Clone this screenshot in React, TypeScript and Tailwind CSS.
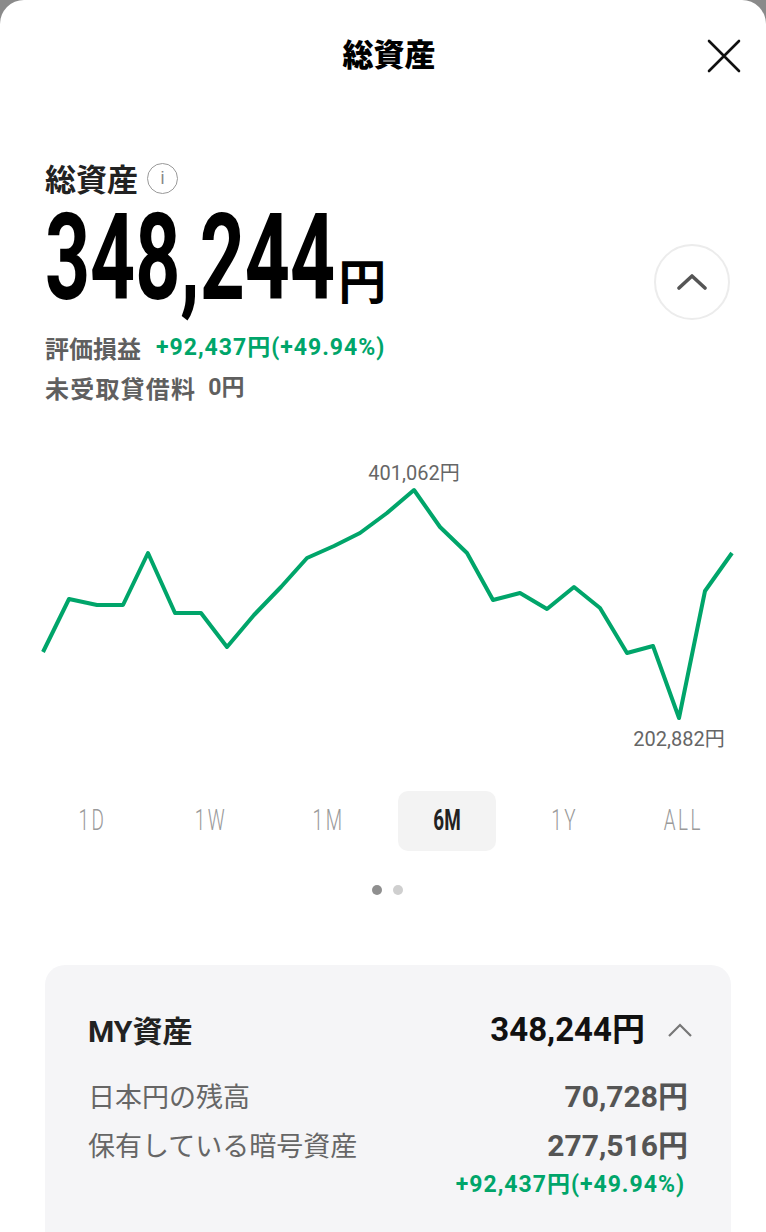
import React from "react";

const jp = "font-['Noto_Sans_CJK_JP','Noto_Sans',sans-serif]";
const num = "font-['Roboto','Noto_Sans_CJK_JP',sans-serif]";

const points: [number, number][] = [
  [43, 652], [69, 599], [97, 605], [123, 605], [148, 553], [175, 613], [201, 613],
  [227, 647], [254, 615], [281, 587], [307, 558], [334, 546], [360, 533], [387, 513],
  [414, 490], [440, 527], [467, 553], [493, 600], [520, 593], [547, 609], [574, 587],
  [600, 608], [627, 653], [653, 646], [679, 718], [705, 591], [732, 553],
];

const ranges = ["1D", "1W", "1M", "6M", "1Y", "ALL"];

const Chart = () => {
  const top = 440;
  const d = points.map(([x, y], i) => `${i ? "L" : "M"}${x} ${y - top}`).join(" ");
  return (
    <svg width="766" height="320" viewBox="0 0 766 320" className="block">
      <path d={d} fill="none" stroke="#00a56a" strokeWidth="4" strokeLinejoin="round" />
      <text x="414" y="40" textAnchor="middle" fontSize="20" fill="#666"
        fontFamily="Roboto,'Noto Sans CJK JP',sans-serif">401,062円</text>
      <text x="679" y="306" textAnchor="middle" fontSize="20" fill="#666"
        fontFamily="Roboto,'Noto Sans CJK JP',sans-serif">202,882円</text>
    </svg>
  );
};

export default function App() {
  return (
    <div className="h-[1232px] w-[766px] overflow-hidden bg-[#8a8a8a]">
      <div className={`relative h-full rounded-t-[24px] bg-white ${jp}`}>
        {/* header */}
        <div className="relative flex h-[110px] items-center justify-center pb-[6px] pl-[12px]">
          <h1 className="text-[31px] font-black leading-none text-black">総資産</h1>
          <button className="absolute right-[24px] top-[38px] h-[36px] w-[36px]">
            <svg viewBox="0 0 36 36" width="36" height="36">
              <path d="M3 3 L33 33 M33 3 L3 33" stroke="#111" strokeWidth="2.6" strokeLinecap="round" />
            </svg>
          </button>
        </div>

        {/* total */}
        <div className="relative px-[45px] pt-[50px]">
          <div className="flex h-[36px] items-center gap-[9px]">
            <span className="text-[31px] font-bold leading-[36px] text-[#222]">総資産</span>
            <span className="flex h-[31px] w-[31px] items-center justify-center rounded-full border-[1.5px] border-[#999] font-['Liberation_Sans',sans-serif] text-[18px] leading-none text-[#888]">
              i
            </span>
          </div>
          <div className="mt-[17px] flex h-[90px] items-baseline">
            <span className={`${num} mr-[-159px] inline-block origin-left scale-x-[0.65] text-[121px] font-bold leading-[90px] text-black`}>
              348,244
            </span>
            <span className="ml-[6px] text-[48px] font-semibold leading-[40px] text-black">円</span>
          </div>
          <button className="absolute right-[36px] top-[134px] flex h-[76px] w-[76px] items-center justify-center rounded-full border-2 border-[#ececec]">
            <svg viewBox="0 0 30 20" width="30" height="20">
              <path d="M2 16 L15 4 L28 16" fill="none" stroke="#555" strokeWidth="3.6" strokeLinecap="round" strokeLinejoin="round" />
            </svg>
          </button>
          <div className="mt-[25px] flex h-[40px] items-center gap-[15px] text-[24px] font-bold text-[#5f5f5f]">
            <span>評価損益</span>
            <span className={`${num} text-[23px] tracking-[1px] text-[#00a56a]`}>+92,437円(+49.94%)</span>
          </div>
          <div className="flex h-[40px] items-center gap-[12px] text-[24px] font-bold text-[#5f5f5f]">
            <span className="tracking-[1.2px]">未受取貸借料</span>
            <span className={`${num} text-[23px]`}>0円</span>
          </div>
        </div>

        {/* chart */}
        <div className="mt-[32px]">
          <Chart />
        </div>

        {/* range tabs */}
        <div className="ml-[34px] mt-[31px] grid w-[708px] grid-cols-6">
          {ranges.map((r) => (
            <div key={r} className="flex h-[60px] items-center justify-center">
              {r === "6M" ? (
                <span className="mx-[10px] flex h-[60px] w-full items-center justify-center rounded-[10px] bg-[#f3f3f3]">
                  <span className={`${num} inline-block scale-x-[0.65] text-[29px] font-bold text-[#222]`}>{r}</span>
                </span>
              ) : (
                <span className={`${num} inline-block scale-x-[0.65] text-[29px] font-light tracking-[4px] text-[#9a9a9a]`}>{r}</span>
              )}
            </div>
          ))}
        </div>

        {/* pager */}
        <div className="mt-[34px] flex justify-center gap-[11px] pl-[8px]">
          <span className="h-[10px] w-[10px] rounded-full bg-[#8f8f8f]" />
          <span className="h-[10px] w-[10px] rounded-full bg-[#cfcfcf]" />
        </div>

        {/* my assets card */}
        <div className="ml-[45px] mr-[35px] mt-[70px] h-[300px] rounded-[20px] bg-[#f5f5f7] px-[43px] pt-[45px]">
          <div className="flex h-[40px] items-center">
            <span className="text-[30px] font-bold text-[#222]">
              <span className={`${num} inline-block`}>MY</span>資産
            </span>
            <span className={`${num} ml-auto text-[33px] font-bold text-[#111]`}>348,244円</span>
            <svg viewBox="0 0 26 16" width="26" height="16" className="ml-[22px] mr-[-5px]">
              <path d="M2 14 L13 3 L24 14" fill="none" stroke="#777" strokeWidth="2.2" />
            </svg>
          </div>
          <div className="mt-[26px] flex h-[40px] items-center text-[27px] text-[#666]">
            <span>日本円の残高</span>
            <span className={`${num} ml-auto text-[30px] font-bold text-[#555]`}>70,728円</span>
          </div>
          <div className="mt-[9px] flex h-[40px] items-center text-[27px] text-[#666]">
            <span>保有している暗号資産</span>
            <span className={`${num} ml-auto text-[30px] font-bold text-[#555]`}>277,516円</span>
          </div>
          <div className={`${num} mr-[3px] mt-[5px] h-[30px] text-right text-[23px] font-bold leading-[30px] tracking-[1px] text-[#00a56a]`}>
            +92,437円(+49.94%)
          </div>
        </div>
      </div>
    </div>
  );
}
